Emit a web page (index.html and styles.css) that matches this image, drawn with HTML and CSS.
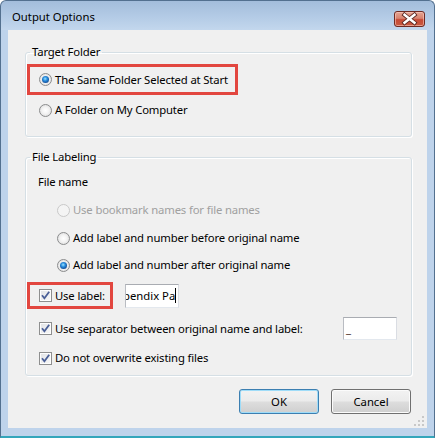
FILE: index.html
```html
<!DOCTYPE html>
<html>
<head>
<meta charset="utf-8">
<title>Output Options</title>
<link rel="stylesheet" href="styles.css">
</head>
<body>
<div class="window">
  <div class="titlebar">
    <span class="title">Output Options</span>
    <button class="close" aria-label="Close">
      <svg width="31" height="16" viewBox="0 0 31 16">
        <path d="M10.5 3.8 L20.5 11.8 M20.5 3.8 L10.5 11.8" stroke="#5e2a24" stroke-width="4.2" stroke-linecap="square" fill="none"/>
        <path d="M10.5 3.8 L20.5 11.8 M20.5 3.8 L10.5 11.8" stroke="#ffffff" stroke-width="2.4" stroke-linecap="square" fill="none"/>
      </svg>
    </button>
  </div>
  <div class="client">
    <fieldset class="group g1">
      <legend>Target Folder</legend>
      <div class="hl hl1">
        <div class="opt"><span class="radio on"></span><span>The Same Folder Selected at Start</span></div>
      </div>
      <div class="opt r2"><span class="radio"></span><span>A Folder on My Computer</span></div>
    </fieldset>
    <fieldset class="group g2">
      <legend>File Labeling</legend>
      <div class="sub">File name</div>
      <div class="opt ind first disabled"><span class="radio dis"></span><span>Use bookmark names for file names</span></div>
      <div class="opt ind second"><span class="radio"></span><span>Add label and number before original name</span></div>
      <div class="opt ind third"><span class="radio on"></span><span>Add label and number after original name</span></div>
      <div class="labelrow">
        <div class="hl hl2">
          <div class="opt"><span class="check"><svg width="11" height="11" viewBox="0 0 11 11"><path d="M2 5.2 L4.4 8.2 L9.2 1.8" stroke="#4a5f97" stroke-width="1.8" fill="none"/></svg></span><span>Use label:</span></div>
        </div>
        <div class="textbox tb1"><span class="tbtext">pendix Pa</span><span class="caret"></span></div>
      </div>
      <div class="seprow">
        <div class="opt"><span class="check"><svg width="11" height="11" viewBox="0 0 11 11"><path d="M2 5.2 L4.4 8.2 L9.2 1.8" stroke="#4a5f97" stroke-width="1.8" fill="none"/></svg></span><span>Use separator between original name and label:</span></div>
        <div class="textbox tb2"><span class="us">_</span></div>
      </div>
      <div class="opt last"><span class="check"><svg width="11" height="11" viewBox="0 0 11 11"><path d="M2 5.2 L4.4 8.2 L9.2 1.8" stroke="#4a5f97" stroke-width="1.8" fill="none"/></svg></span><span>Do not overwrite existing files</span></div>
    </fieldset>
    <div class="buttons">
      <button class="btn default">OK</button>
      <button class="btn">Cancel</button>
    </div>
    <svg class="grip" width="10" height="10" viewBox="0 0 10 10">
      <rect x="8" y="0" width="2" height="2" fill="#c8c8c8"/>
      <rect x="8" y="4" width="2" height="2" fill="#c8c8c8"/>
      <rect x="4" y="4" width="2" height="2" fill="#c8c8c8"/>
      <rect x="8" y="8" width="2" height="2" fill="#c8c8c8"/>
      <rect x="4" y="8" width="2" height="2" fill="#c8c8c8"/>
      <rect x="0" y="8" width="2" height="2" fill="#c8c8c8"/>
    </svg>
  </div>
</div>
</body>
</html>
```
FILE: styles.css
```css
* { box-sizing: border-box; }
html, body { margin: 0; padding: 0; background: #ffffff; }
body {
  font-family: "Noto Sans", "Open Sans", sans-serif;
  font-size: 11.3px;
  letter-spacing: -0.15px;
  line-height: 16px;
  color: #000;
}
.window {
  width: 435px;
  height: 438px;
  border: 1px solid #53708f;
  border-bottom: 2px solid #34a6bb;
  border-radius: 6px 6px 0 0;
  background: linear-gradient(to bottom, #a3bddb 0, #b6cde7 18px, #c3d7ed 29px, #bed3eb 29px, #bed3eb 100%);
  display: flex;
  flex-direction: column;
  overflow: hidden;
}
.titlebar {
  height: 29px;
  display: flex;
  align-items: flex-start;
  padding-left: 11px;
  padding-top: 8px;
  padding-right: 9px;
}
.title { flex: 1; letter-spacing: 0; }
.close {
  width: 31px;
  height: 16px;
  margin-top: 2px;
  padding: 0;
  border: 1px solid #6f2a22;
  border-radius: 3px;
  background: linear-gradient(to bottom, #e4a492 0, #d88370 45%, #c74a35 55%, #c85a40 100%);
  box-shadow: inset 0 0 0 1px rgba(255, 210, 200, 0.55);
  display: flex;
  align-items: center;
  justify-content: center;
}
.close svg { display: block; margin: -1px; }
.client {
  position: relative;
  margin: 0 7px;
  height: 398px;
  background: #f0f0f0;
  padding-top: 14px;
}
.group {
  margin: 0 15px 0 17px;
  padding: 0;
  min-width: 0;
  border: 1px solid #d5dfe5;
  border-radius: 3px;
  box-shadow: inset 1px 1px 0 #fff, 1px 1px 0 #fff;
}
.group legend {
  margin-left: 4px;
  padding: 0 2px;
  line-height: 16px;
}
.g2 { margin-top: 12px; }
.opt {
  display: flex;
  align-items: center;
  height: 16px;
  white-space: nowrap;
}
.radio, .check {
  width: 13px;
  height: 13px;
  flex: none;
  margin-right: 3px;
}
.radio {
  border-radius: 50%;
  border: 1px solid #8b8c8d;
  background: radial-gradient(circle at 50% 50%, #ffffff 0, #f4f4f4 40%, #d6d6d6 100%);
  position: relative;
}
.radio.on::after {
  content: "";
  position: absolute;
  left: 2px;
  top: 2px;
  width: 7px;
  height: 7px;
  border-radius: 50%;
  background: radial-gradient(circle at 45% 40%, #9ee4ff 0, #2a8fdf 35%, #104a95 75%, #0d2f6a 100%);
}
.radio.dis {
  border-color: #c9c9c9;
  background: #f4f4f4;
}
.check {
  border: 1px solid #8e8f8f;
  background: linear-gradient(135deg, #e1e3e6 0, #f8f8f8 100%);
  box-shadow: inset 0 0 0 1px #fdfdfd;
  display: flex;
  align-items: center;
  justify-content: center;
}
.check svg { display: block; }
.disabled { color: #a0a0a0; }
.hl {
  border: 3px solid #e2463f;
  display: flex;
  align-items: center;
  padding-left: 9px;
}
.hl1 {
  margin: 4px 0 0 1px;
  height: 31px;
  width: 211px;
}
.r2 { margin: 7px 0 18px 13px; }
.sub { margin: 9px 0 0 12px; height: 16px; }
.ind { margin-left: 31px; }
.first { margin-top: 12px; }
.second { margin-top: 12px; }
.third { margin-top: 11px; }
.labelrow {
  display: flex;
  align-items: center;
  margin: 9px 0 0 1px;
}
.hl2 { height: 27px; width: 86px; }
.textbox {
  background: #fff;
  border: 1px solid;
  border-color: #a9acb2 #dadde3 #e3e8ee #b9bcc2;
  overflow: hidden;
  white-space: nowrap;
  display: flex;
  align-items: center;
}
.tb1 {
  width: 54px;
  height: 24px;
  margin-left: 12px;
}
.tbtext { margin-left: -3px; letter-spacing: 0; }
.caret {
  width: 1px;
  height: 15px;
  background: #000;
  flex: none;
}
.seprow {
  display: flex;
  align-items: center;
  margin: 8px 14px 0 13px;
  justify-content: space-between;
}
.tb2 { width: 54px; height: 23px; padding-left: 2px; }
.us { color: #3a1a10; }
.last { margin: 10px 0 9px 13px; }
.buttons {
  display: flex;
  justify-content: flex-end;
  gap: 12px;
  margin-top: 13px;
  padding-right: 16px;
}
.btn {
  width: 80px;
  height: 25px;
  padding: 0;
  font: inherit;
  color: #000;
  border: 1px solid #707070;
  border-radius: 3px;
  background: linear-gradient(to bottom, #f2f2f2 0, #ebebeb 48%, #dddddd 52%, #cfcfcf 100%);
  box-shadow: inset 0 0 0 1px #fbfbfb;
}
.btn.default {
  border-color: #3c7fb1;
  box-shadow: inset 0 0 0 1px #9fdcf8;
}
.grip {
  position: absolute;
  right: 3px;
  bottom: 2px;
}
```
